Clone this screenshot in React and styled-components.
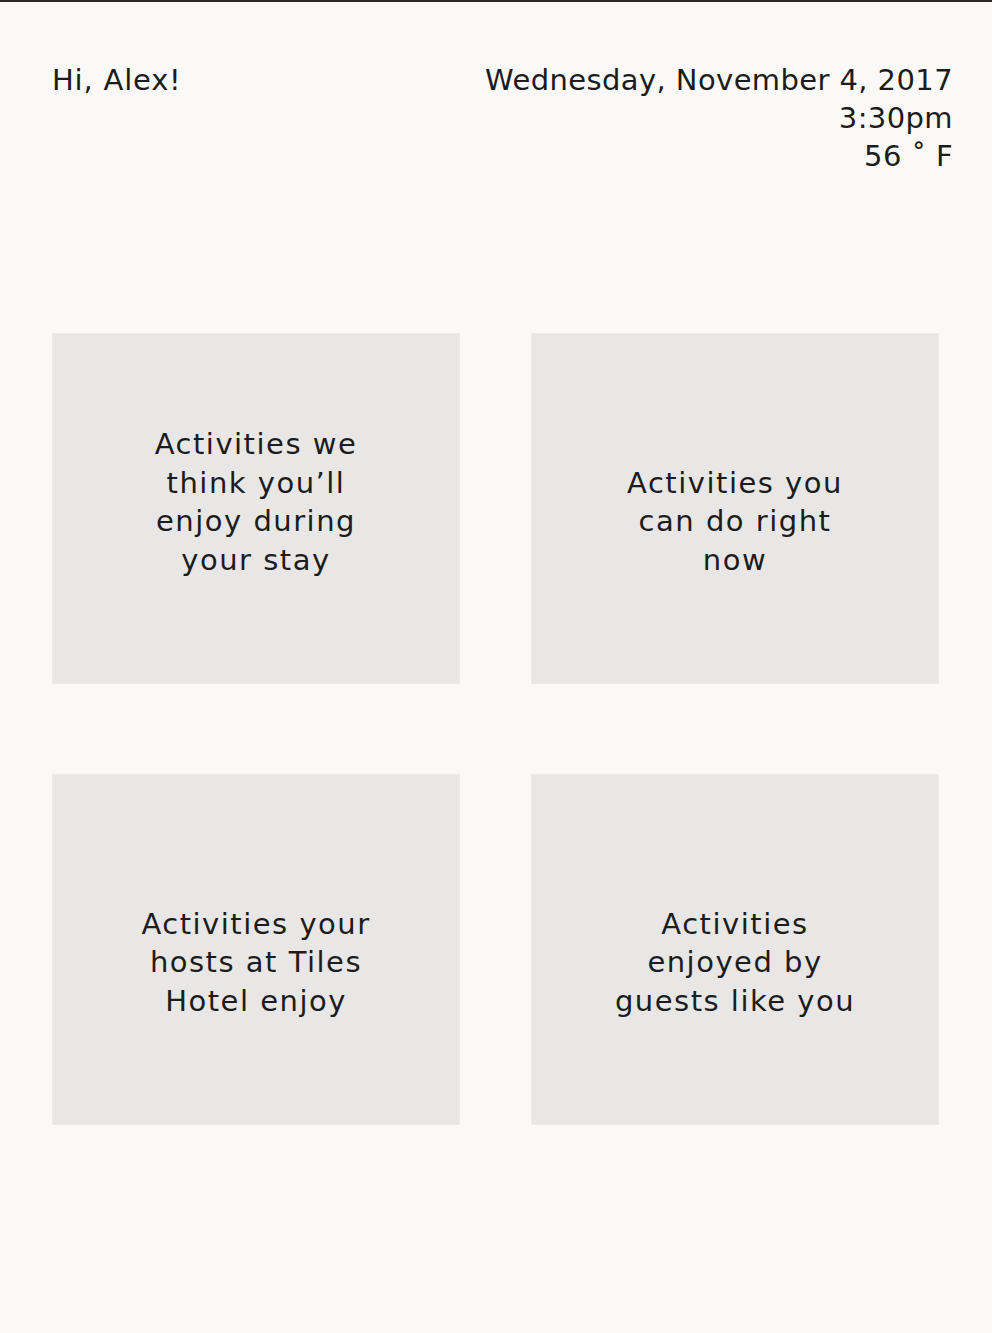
import React from "react";
import styled, { createGlobalStyle } from "styled-components";

const GlobalStyle = createGlobalStyle`
  html, body {
    margin: 0;
    padding: 0;
    background: #faf9f7;
  }
  body {
    font-family: "DejaVu Sans", "Open Sans", sans-serif;
    color: #1c1c1c;
  }
`;

const Page = styled.div`
  min-height: 1333px;
  box-sizing: border-box;
  border-top: 2px solid #2a2a2a;
  background: #faf9f7;
`;

const Header = styled.header`
  display: flex;
  justify-content: space-between;
  align-items: flex-start;
  padding: 59px 39px 0 52px;
  font-size: 29px;
  line-height: 38px;
  letter-spacing: 0.4px;
`;

const Greeting = styled.div`
  letter-spacing: 0.8px;
`;

const Info = styled.div`
  display: flex;
  flex-direction: column;
  align-items: flex-end;
`;

const Grid = styled.main`
  display: grid;
  grid-template-columns: 408px 408px;
  grid-auto-rows: 351px;
  column-gap: 71px;
  row-gap: 90px;
  padding: 0 52px;
  margin-top: 158px;
`;

const Card = styled.div`
  display: flex;
  align-items: flex-end;
  justify-content: center;
  box-sizing: border-box;
  background: #e8e7e5;
  border: 1px solid #ecebe9;
  text-align: center;
  font-size: 29px;
  line-height: 38.5px;
  letter-spacing: 1.5px;
  padding: 0 20px 104px;
`;

const cards = [
  ["Activities we", "think you’ll", "enjoy during", "your stay"],
  ["Activities you", "can do right", "now"],
  ["Activities your", "hosts at Tiles", "Hotel enjoy"],
  ["Activities", "enjoyed by", "guests like you"],
];

export default function App() {
  return (
    <Page>
      <GlobalStyle />
      <Header>
        <Greeting>Hi, Alex!</Greeting>
        <Info>
          <span>Wednesday, November 4, 2017</span>
          <span>3:30pm</span>
          <span>56 ˚ F</span>
        </Info>
      </Header>
      <Grid>
        {cards.map((lines, i) => (
          <Card key={i}>
            <div>
              {lines.map((l, j) => (
                <React.Fragment key={j}>
                  {l}
                  {j < lines.length - 1 && <br />}
                </React.Fragment>
              ))}
            </div>
          </Card>
        ))}
      </Grid>
    </Page>
  );
}
